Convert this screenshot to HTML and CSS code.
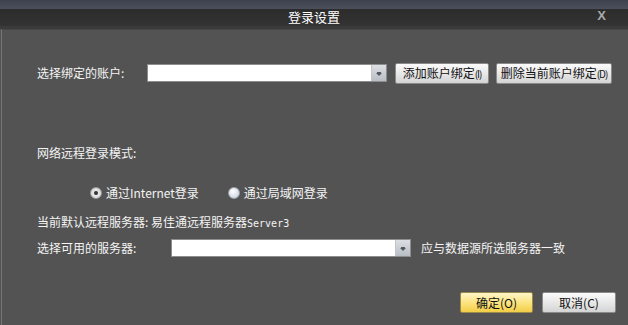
FILE: index.html
```html
<!DOCTYPE html>
<html lang="zh-CN">
<head>
<meta charset="UTF-8">
<meta name="viewport" content="width=device-width, initial-scale=1.0">
<title>登录设置</title>
<link rel="stylesheet" href="styles.css">
</head>
<body>

<div class="dialog">
<div class="topband"></div>
<div class="titlebar">
<span class="title">登录设置</span>
<span class="close">X</span>
</div>

<div class="content">
<div class="row row-account">
<label class="label label-account">选择绑定的账户:</label>
<div class="combo combo-account">
<div class="combo-field"></div>
<div class="combo-arrow"><span class="arrow"></span></div>
</div>
<button class="btn btn-gray btn-add">添加账户绑定<span class="key">(I)</span></button>
<button class="btn btn-gray btn-del">删除当前账户绑定<span class="key">(D)</span></button>
</div>

<div class="row row-mode">
<span class="label">网络远程登录模式:</span>
</div>

<div class="row row-radios">
<label class="radio radio-internet"><span class="dot checked"></span>通过Internet登录</label>
<label class="radio radio-lan"><span class="dot"></span>通过局域网登录</label>
</div>

<div class="row row-default">
<span class="label">当前默认远程服务器: 易佳通远程服务器<span class="mono">Server3</span></span>
</div>

<div class="row row-server">
<label class="label label-server">选择可用的服务器:</label>
<div class="combo combo-server">
<div class="combo-field"></div>
<div class="combo-arrow"><span class="arrow"></span></div>
</div>
<span class="note">应与数据源所选服务器一致</span>
</div>

<div class="row row-footer">
<button class="btn btn-ok">确定(O)</button>
<button class="btn btn-gray btn-cancel">取消(C)</button>
</div>
</div>
</div>

</body>
</html>
```

FILE: styles.css
```css
html, body {
margin: 0;
padding: 0;
}
body {
font-family: "Noto Sans CJK SC", "Liberation Sans", sans-serif;
font-size: 12px;
color: #f4f4f4;
background-color: #535353;
width: 628px;
height: 325px;
overflow: hidden;
}
.dialog {
display: flex;
flex-direction: column;
height: 325px;
}
.topband {
height: 9px;
background: linear-gradient(#3c414d, #4b505c);
}
.titlebar {
height: 17px;
background: linear-gradient(#2c2c2c, #333333);
border-bottom: 3px solid #3b3b3b;
position: relative;
display: flex;
justify-content: center;
align-items: center;
}
.title {
font-size: 13px;
line-height: 14px;
color: #ffffff;
margin-top: -2px;
}
.close {
position: absolute;
right: 22px;
top: -1px;
font-family: "Liberation Sans", sans-serif;
font-weight: bold;
font-size: 13px;
color: #a8a8a8;
}
.content {
flex: 1;
margin-left: 1px;
border-left: 1px solid #767676;
border-top: 1px solid #474747;
padding-left: 35px;
}
.row {
display: flex;
align-items: center;
}
.label {
line-height: 14px;
white-space: nowrap;
}
.row-account {
margin-top: 32px;
height: 22px;
}
.label-account {
width: 110px;
}
.combo {
display: flex;
height: 18px;
box-sizing: border-box;
border: 1px solid #8e8e8e;
background: #ffffff;
}
.combo-account {
width: 240px;
margin-right: 8px;
}
.combo-field {
flex: 1;
}
.combo-arrow {
width: 14px;
background: linear-gradient(#dcdfe3, #b9bec5);
border-left: 1px solid #c4c4c4;
display: flex;
align-items: center;
justify-content: center;
}
.arrow {
width: 0;
height: 0;
border-left: 3px solid transparent;
border-right: 3px solid transparent;
border-top: 3px solid #555a60;
box-shadow: 0 -2px 0 -1px #555a60;
margin-top: 2px;
}
.btn {
font-family: "Noto Sans CJK SC", "Liberation Sans", sans-serif;
font-size: 12px;
line-height: 14px;
color: #111111;
height: 21px;
padding: 0;
border-radius: 2px;
cursor: pointer;
}
.btn-gray {
background: linear-gradient(#fbfbfb, #e6e6e6 55%, #d4d4d4);
border: 1px solid #8a8a8a;
}
.key {
font-size: 10px;
letter-spacing: -1px;
}
.btn-add {
width: 94px;
margin-right: 7px;
}
.btn-del {
width: 116px;
}
.row-mode {
margin-top: 62px;
height: 14px;
}
.row-radios {
margin-top: 25px;
height: 16px;
padding-left: 53px;
}
.radio {
display: flex;
align-items: center;
line-height: 14px;
}
.radio-internet {
margin-right: 29px;
}
.dot {
width: 12px;
height: 12px;
box-sizing: border-box;
border-radius: 50%;
border: 1px solid #9aa2ad;
background: radial-gradient(circle at 40% 35%, #ffffff, #d4dae3 70%, #b8c0cc);
margin-right: 4px;
}
.dot.checked {
background: radial-gradient(circle, #333333 0, #3c3c3c 1.5px, #e6e6e6 2.5px, #d2d2d2 100%);
border-color: #9a9a9a;
}
.row-default {
margin-top: 15px;
height: 14px;
}
.mono {
font-family: "DejaVu Sans Mono", "Liberation Mono", monospace;
font-size: 10px;
}
.row-server {
margin-top: 9px;
height: 18px;
}
.label-server {
width: 134px;
}
.combo-server {
width: 240px;
margin-right: 10px;
}
.note {
line-height: 14px;
}
.row-footer {
margin-top: 35px;
justify-content: flex-end;
padding-right: 12px;
}
.btn-ok {
width: 73px;
margin-right: 9px;
background: linear-gradient(#fff6c8, #fbe27a 55%, #f2cd48);
border: 1px solid #9c8a4c;
}
.btn-cancel {
width: 74px;
}
```
